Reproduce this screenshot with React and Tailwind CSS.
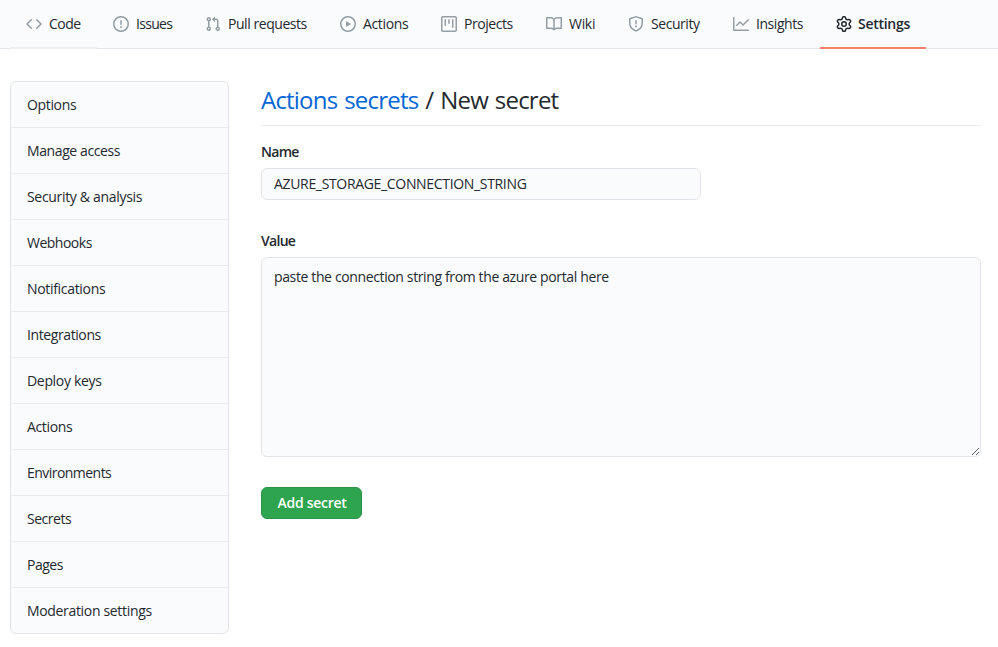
const icons = {
  code: "M4.72 3.22a.75.75 0 011.06 1.06L2.06 8l3.72 3.72a.75.75 0 11-1.06 1.06L.47 8.53a.75.75 0 010-1.06l4.25-4.25zm6.56 0a.75.75 0 10-1.06 1.06L13.94 8l-3.72 3.72a.75.75 0 101.06 1.06l4.25-4.25a.75.75 0 000-1.06l-4.25-4.25z",
  issue: "M8 1.5a6.5 6.5 0 100 13 6.5 6.5 0 000-13zM0 8a8 8 0 1116 0A8 8 0 010 8zm9 3a1 1 0 11-2 0 1 1 0 012 0zm-.25-6.25a.75.75 0 00-1.5 0v3.5a.75.75 0 001.5 0v-3.5z",
  pull: "M7.177 3.073L9.573.677A.25.25 0 0110 .854v4.792a.25.25 0 01-.427.177L7.177 3.427a.25.25 0 010-.354zM3.75 2.5a.75.75 0 100 1.5.75.75 0 000-1.5zm-2.25.75a2.25 2.25 0 113 2.122v5.256a2.251 2.251 0 11-1.5 0V5.372A2.25 2.25 0 011.5 3.25zM11 2.5h-1V4h1a1 1 0 011 1v5.628a2.251 2.251 0 101.5 0V5A2.5 2.5 0 0011 2.5zm1 10.25a.75.75 0 111.5 0 .75.75 0 01-1.5 0zM3.75 12a.75.75 0 100 1.5.75.75 0 000-1.5z",
  play: "M1.5 8a6.5 6.5 0 1113 0 6.5 6.5 0 01-13 0zM8 0a8 8 0 100 16A8 8 0 008 0zM6.379 5.227A.25.25 0 006 5.442v5.117a.25.25 0 00.379.214l4.264-2.559a.25.25 0 000-.428L6.379 5.227z",
  project: "M1.75 0A1.75 1.75 0 000 1.75v12.5C0 15.216.784 16 1.75 16h12.5A1.75 1.75 0 0016 14.25V1.75A1.75 1.75 0 0014.25 0H1.75zM1.5 1.75a.25.25 0 01.25-.25h12.5a.25.25 0 01.25.25v12.5a.25.25 0 01-.25.25H1.75a.25.25 0 01-.25-.25V1.75zM11.75 3a.75.75 0 00-.75.75v7.5a.75.75 0 001.5 0v-7.5a.75.75 0 00-.75-.75zm-8.25.75a.75.75 0 011.5 0v5.5a.75.75 0 01-1.5 0v-5.5zM8 3a.75.75 0 00-.75.75v3.5a.75.75 0 001.5 0v-3.5A.75.75 0 008 3z",
  book: "M0 1.75A.75.75 0 01.75 1h4.253c1.227 0 2.317.59 3 1.501A3.744 3.744 0 0111.006 1h4.245a.75.75 0 01.75.75v10.5a.75.75 0 01-.75.75h-4.507a2.25 2.25 0 00-1.591.659l-.622.621a.75.75 0 01-1.06 0l-.622-.621A2.25 2.25 0 005.258 13H.75a.75.75 0 01-.75-.75V1.75zm8.755 3a2.25 2.25 0 012.25-2.25H14.5v9h-3.757c-.71 0-1.4.201-1.992.572l.004-7.322zm-1.504 7.324l.004-5.073-.002-2.253A2.25 2.25 0 005.003 2.5H1.5v9h3.757a3.75 3.75 0 011.994.574z",
  shield: "M7.467.133a1.75 1.75 0 011.066 0l5.25 1.68A1.75 1.75 0 0115 3.48V7c0 1.566-.32 3.182-1.303 4.682-.983 1.498-2.585 2.813-5.032 3.855a1.7 1.7 0 01-1.33 0c-2.447-1.042-4.049-2.357-5.032-3.855C1.32 10.182 1 8.566 1 7V3.48a1.75 1.75 0 011.217-1.667l5.25-1.68zm.61 1.429a.25.25 0 00-.153 0l-5.25 1.68a.25.25 0 00-.174.238V7c0 1.358.275 2.666 1.057 3.86.784 1.194 2.121 2.34 4.366 3.297a.2.2 0 00.154 0c2.245-.956 3.582-2.104 4.366-3.298C13.225 9.666 13.5 8.36 13.5 7V3.48a.25.25 0 00-.174-.237l-5.25-1.68zM9 10.5a1 1 0 11-2 0 1 1 0 012 0zm-.25-5.75a.75.75 0 10-1.5 0v3a.75.75 0 001.5 0v-3z",
  graph: "M1.5 1.75a.75.75 0 00-1.5 0v12.5c0 .414.336.75.75.75h14.5a.75.75 0 000-1.5H1.5V1.75zm14.28 2.53a.75.75 0 00-1.06-1.06L10 7.94 7.53 5.47a.75.75 0 00-1.06 0L3.22 8.72a.75.75 0 001.06 1.06L7 7.06l2.47 2.47a.75.75 0 001.06 0l5.25-5.25z",
  gear: "M7.429 1.525a6.593 6.593 0 011.142 0c.036.003.108.036.137.146l.289 1.105c.147.56.55.967.997 1.189.174.086.341.183.501.29.417.278.97.423 1.53.27l1.102-.303c.11-.03.175.016.195.046.219.31.41.641.573.989.014.031.022.11-.059.19l-.815.806c-.411.406-.562.957-.53 1.456a4.588 4.588 0 010 .582c-.032.499.119 1.05.53 1.456l.815.806c.08.08.073.159.059.19a6.494 6.494 0 01-.573.99c-.02.029-.086.074-.195.045l-1.103-.303c-.559-.153-1.112-.008-1.529.27-.16.107-.327.204-.5.29-.449.222-.851.628-.998 1.189l-.289 1.105c-.029.11-.101.143-.137.146a6.613 6.613 0 01-1.142 0c-.036-.003-.108-.037-.137-.146l-.289-1.105c-.147-.56-.55-.967-.997-1.189a4.502 4.502 0 01-.501-.29c-.417-.278-.97-.423-1.53-.27l-1.102.303c-.11.03-.175-.016-.195-.046a6.492 6.492 0 01-.573-.989c-.014-.031-.022-.11.059-.19l.815-.806c.411-.406.562-.957.53-1.456a4.587 4.587 0 010-.582c.032-.499-.119-1.05-.53-1.456l-.815-.806c-.08-.08-.073-.159-.059-.19a6.44 6.44 0 01.573-.99c.02-.029.086-.075.195-.045l1.103.303c.559.153 1.112.008 1.529-.27.16-.107.327-.204.5-.29.449-.222.851-.628.998-1.189l.289-1.105c.029-.11.101-.143.137-.146zM8 0c-.236 0-.47.01-.701.03-.743.065-1.29.615-1.458 1.261l-.29 1.106c-.017.066-.078.158-.211.224a5.994 5.994 0 00-.668.386c-.123.082-.233.09-.3.071L3.27 2.776c-.644-.177-1.392.02-1.82.63a7.977 7.977 0 00-.704 1.217c-.315.675-.111 1.422.363 1.891l.815.806c.05.048.098.147.088.294a6.084 6.084 0 000 .772c.01.147-.038.246-.088.294l-.815.806c-.474.469-.678 1.216-.363 1.891.2.428.436.835.704 1.218.428.609 1.176.806 1.82.63l1.103-.303c.066-.019.176-.011.299.071.213.143.436.272.668.386.133.066.194.158.212.224l.289 1.106c.169.646.715 1.196 1.458 1.26a8.094 8.094 0 001.402 0c.743-.064 1.29-.614 1.458-1.26l.29-1.106c.017-.066.078-.158.211-.224a5.98 5.98 0 00.668-.386c.123-.082.233-.09.3-.071l1.102.302c.644.177 1.392-.02 1.82-.63.268-.382.505-.789.704-1.217.315-.675.111-1.422-.364-1.891l-.814-.806c-.05-.048-.098-.147-.088-.294a6.1 6.1 0 000-.772c-.01-.147.039-.246.088-.294l.814-.806c.475-.469.679-1.216.364-1.891a7.992 7.992 0 00-.704-1.218c-.428-.609-1.176-.806-1.82-.63l-1.103.303c-.066.019-.176.011-.299-.071a5.991 5.991 0 00-.668-.386c-.133-.066-.194-.158-.212-.224L10.16 1.29C9.99.645 9.444.095 8.701.031A8.094 8.094 0 008 0zm1.5 8a1.5 1.5 0 11-3 0 1.5 1.5 0 013 0zM11 8a3 3 0 11-6 0 3 3 0 016 0z",
};

const tabs = [
  { label: "Code", icon: "code", cls: "w-[87px] border-[#eeeff2] tracking-[-0.5px]" },
  { label: "Issues", icon: "issue", cls: "w-[92px] border-transparent tracking-[-0.7px]" },
  { label: "Pull requests", icon: "pull", cls: "w-[135px] border-transparent tracking-[-0.45px]" },
  { label: "Actions", icon: "play", cls: "w-[101px] border-transparent tracking-[-0.35px]" },
  { label: "Projects", icon: "project", cls: "w-[105px] border-transparent tracking-[-0.45px]" },
  { label: "Wiki", icon: "book", cls: "w-[82px] border-transparent tracking-[-0.3px]" },
  { label: "Security", icon: "shield", cls: "w-[105px] border-transparent tracking-[-0.45px]" },
  { label: "Insights", icon: "graph", cls: "w-[103px] border-transparent tracking-[-0.45px]" },
];

const menu = [
  { label: "Options", cls: "tracking-[-0.35px]" },
  { label: "Manage access", cls: "tracking-[-0.4px]" },
  { label: "Security & analysis", cls: "tracking-[-0.32px]" },
  { label: "Webhooks", cls: "tracking-[-0.5px]" },
  { label: "Notifications", cls: "tracking-[-0.32px]" },
  { label: "Integrations", cls: "tracking-[-0.4px]" },
  { label: "Deploy keys", cls: "tracking-[-0.32px]" },
  { label: "Actions", cls: "tracking-[-0.35px]" },
  { label: "Environments", cls: "tracking-[-0.54px]" },
  { label: "Secrets", cls: "tracking-[-0.48px]" },
  { label: "Pages", cls: "tracking-[-0.5px]" },
  { label: "Moderation settings", cls: "tracking-[-0.33px]" },
];

function Icon({ name, className }) {
  return (
    <svg viewBox="0 0 16 16" className={`size-4 shrink-0 ${className}`}>
      <path fillRule="evenodd" d={icons[name]} />
    </svg>
  );
}

export default function App() {
  return (
    <div className="h-[647px] overflow-hidden bg-white font-['Open_Sans',sans-serif] text-sm text-[#24292e]">
      <nav className="flex h-[49px] border-b border-[#e1e4e8] bg-[#fafbfc] pl-[10px]">
        {tabs.map((t) => (
          <a key={t.label} className={`flex h-[49px] shrink-0 items-center gap-[7px] whitespace-nowrap border-b-2 pl-4 pt-px ${t.cls}`}>
            <Icon name={t.icon} className="fill-[#959da5]" />
            <span>{t.label}</span>
          </a>
        ))}
        <a className="flex h-[49px] w-[106px] shrink-0 items-center gap-[6px] border-b-2 border-[#f9826c] pl-4 pt-px font-semibold tracking-[-0.28px]">
          <Icon name="gear" className="fill-[#24292e]" />
          <span>Settings</span>
        </a>
      </nav>

      <div className="flex items-start gap-8 pl-[10px] pt-8">
        <aside className="w-[219px] shrink-0 divide-y divide-[#e9ebef] rounded-md border border-[#e1e4e8] bg-[#fafbfc]">
          {menu.map((m, i) => (
            <a
              key={m.label}
              className={`flex items-center px-4 ${i === menu.length - 1 ? "h-[45px]" : "h-[46px]"} ${m.cls}`}
            >
              {m.label}
            </a>
          ))}
        </aside>

        <main className="w-[720px]">
          <h2 className="h-[45px] border-b border-[#eaecef] text-2xl leading-[37px] tracking-[-0.8px] [word-spacing:1.5px]">
            <a className="text-[#0366d6]">Actions secrets</a> / New secret
          </h2>
          <label className="mt-[15px] block h-[21px] font-semibold leading-[21px] tracking-[-0.7px]">Name</label>
          <input
            defaultValue="AZURE_STORAGE_CONNECTION_STRING"
            className="mt-[6px] block h-8 w-[440px] rounded-md border border-[#e1e4e8] bg-[#fafbfc] px-3 pb-[2px] tracking-[-0.33px] outline-none"
          />
          <label className="mt-[30px] block h-[21px] font-semibold leading-[21px] tracking-[-0.7px]">Value</label>
          <textarea
            defaultValue="paste the connection string from the azure portal here"
            className="mt-[6px] block h-[200px] w-full resize rounded-md border border-[#e1e4e8] bg-[#fafbfc] px-3 py-2 leading-[21px] tracking-[-0.37px] outline-none"
          />
          <button className="mt-[30px] block h-8 w-[101px] rounded-md border border-[#2a9147] bg-[#2ea44f] pl-px font-semibold tracking-[-0.3px] text-white">
            Add secret
          </button>
        </main>
      </div>
    </div>
  );
}
